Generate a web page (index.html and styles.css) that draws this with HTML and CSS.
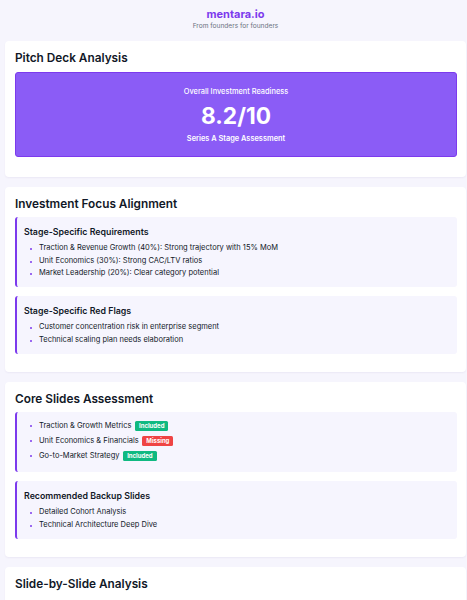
FILE: index.html
```html
<!DOCTYPE html>
<html lang="en">
<head>
<title>mentara.io - Pitch Deck Analysis</title>
<link rel="stylesheet" href="styles.css">
</head>
<body>
<div class="page">
	<div class="brand">
		<p class="logo">mentara.io</p>
		<p class="tagline">From founders for founders</p>
	</div>

	<div class="card">
		<h2>Pitch Deck Analysis</h2>
		<div class="score">
			<p class="score-label">Overall Investment Readiness</p>
			<p class="score-value">8.2/10</p>
			<p class="score-stage">Series A Stage Assessment</p>
		</div>
	</div>

	<div class="card">
		<h2>Investment Focus Alignment</h2>
		<div class="box">
			<h3>Stage-Specific Requirements</h3>
			<ul>
				<li>Traction &amp; Revenue Growth (40%): Strong trajectory with 15% MoM</li>
				<li>Unit Economics (30%): Strong CAC/LTV ratios</li>
				<li>Market Leadership (20%): Clear category potential</li>
			</ul>
		</div>
		<div class="box">
			<h3>Stage-Specific Red Flags</h3>
			<ul>
				<li>Customer concentration risk in enterprise segment</li>
				<li>Technical scaling plan needs elaboration</li>
			</ul>
		</div>
	</div>

	<div class="card">
		<h2>Core Slides Assessment</h2>
		<div class="box slides-box">
			<ul class="slides">
				<li>Traction &amp; Growth Metrics <span class="badge ok">Included</span></li>
				<li>Unit Economics &amp; Financials <span class="badge miss">Missing</span></li>
				<li>Go-to-Market Strategy <span class="badge ok">Included</span></li>
			</ul>
		</div>
		<div class="box">
			<h3>Recommended Backup Slides</h3>
			<ul>
				<li>Detailed Cohort Analysis</li>
				<li>Technical Architecture Deep Dive</li>
			</ul>
		</div>
	</div>

	<div class="card">
		<h2>Slide-by-Slide Analysis</h2>
	</div>
</div>
</body>
</html>
```

FILE: styles.css
```css
* {
	margin: 0;
	padding: 0;
	box-sizing: border-box;
	}
body{
	background-color:#f6f5fd;
	font-family:Inter, "Liberation Sans", sans-serif;
	color:#111827;
	}
.page{
	padding:7px 1px 0 5px;
	}
.brand{
	text-align:center;
	margin-bottom:10px;
	}
.logo{
	font-size:11px;
	font-weight:700;
	color:#7c3aed;
	line-height:14px;
	}
.tagline{
	font-size:6.6px;
	color:#6b7280;
	line-height:9px;
	margin-top:1px;
	}
.card{
	background-color:#fff;
	border-radius:4px;
	box-shadow:0 1px 2px rgba(60,40,120,0.06);
	padding:8px 9px 18px 10px;
	margin-bottom:10px;
	}
h2{
	font-size:11.8px;
	font-weight:600;
	line-height:18px;
	margin-bottom:4.5px;
	}
.score{
	background-color:#8b5cf6;
	border:1px solid #7c3aed;
	border-radius:3px;
	color:#fff;
	text-align:center;
	padding:14px 0 12px;
	margin:2.5px 0 2px;
	}
.score-label{
	font-size:7.4px;
	font-weight:500;
	line-height:10px;
	}
.score-value{
	font-size:22.7px;
	font-weight:700;
	line-height:28px;
	margin:5px 0 4px;
	}
.score-stage{
	font-size:7.4px;
	font-weight:600;
	line-height:10px;
	}
.box{
	background-color:#f6f5fe;
	border-left:2px solid #7c3aed;
	border-radius:3px;
	padding:9px 7px 7.5px;
	margin-bottom:9px;
	}
.box:last-child{
	margin-bottom:0;
	}
h3{
	font-size:8.8px;
	font-weight:600;
	line-height:12px;
	margin-bottom:4px;
	}
ul{
	list-style:none;
	padding-left:15px;
	}
li{
	font-size:7.5px;
	line-height:12.5px;
	position:relative;
	}
li::before{
	content:"";
	position:absolute;
	left:-9px;
	top:6px;
	width:2px;
	height:2px;
	background-color:#7c3aed;
	border-radius:50%;
	}
.slides-box{
	padding-top:6px;
	padding-bottom:9px;
	}
.slides li{
	line-height:15px;
	}
.slides li::before{
	top:7px;
	}
.badge{
	display:inline-block;
	font-size:6px;
	font-weight:700;
	color:#fff;
	line-height:9.5px;
	padding:0 4px;
	border-radius:1.5px;
	margin-left:1.5px;
	vertical-align:middle;
	}
.ok{
	background-color:#10b981;
	}
.miss{
	background-color:#ef4444;
	}
```
